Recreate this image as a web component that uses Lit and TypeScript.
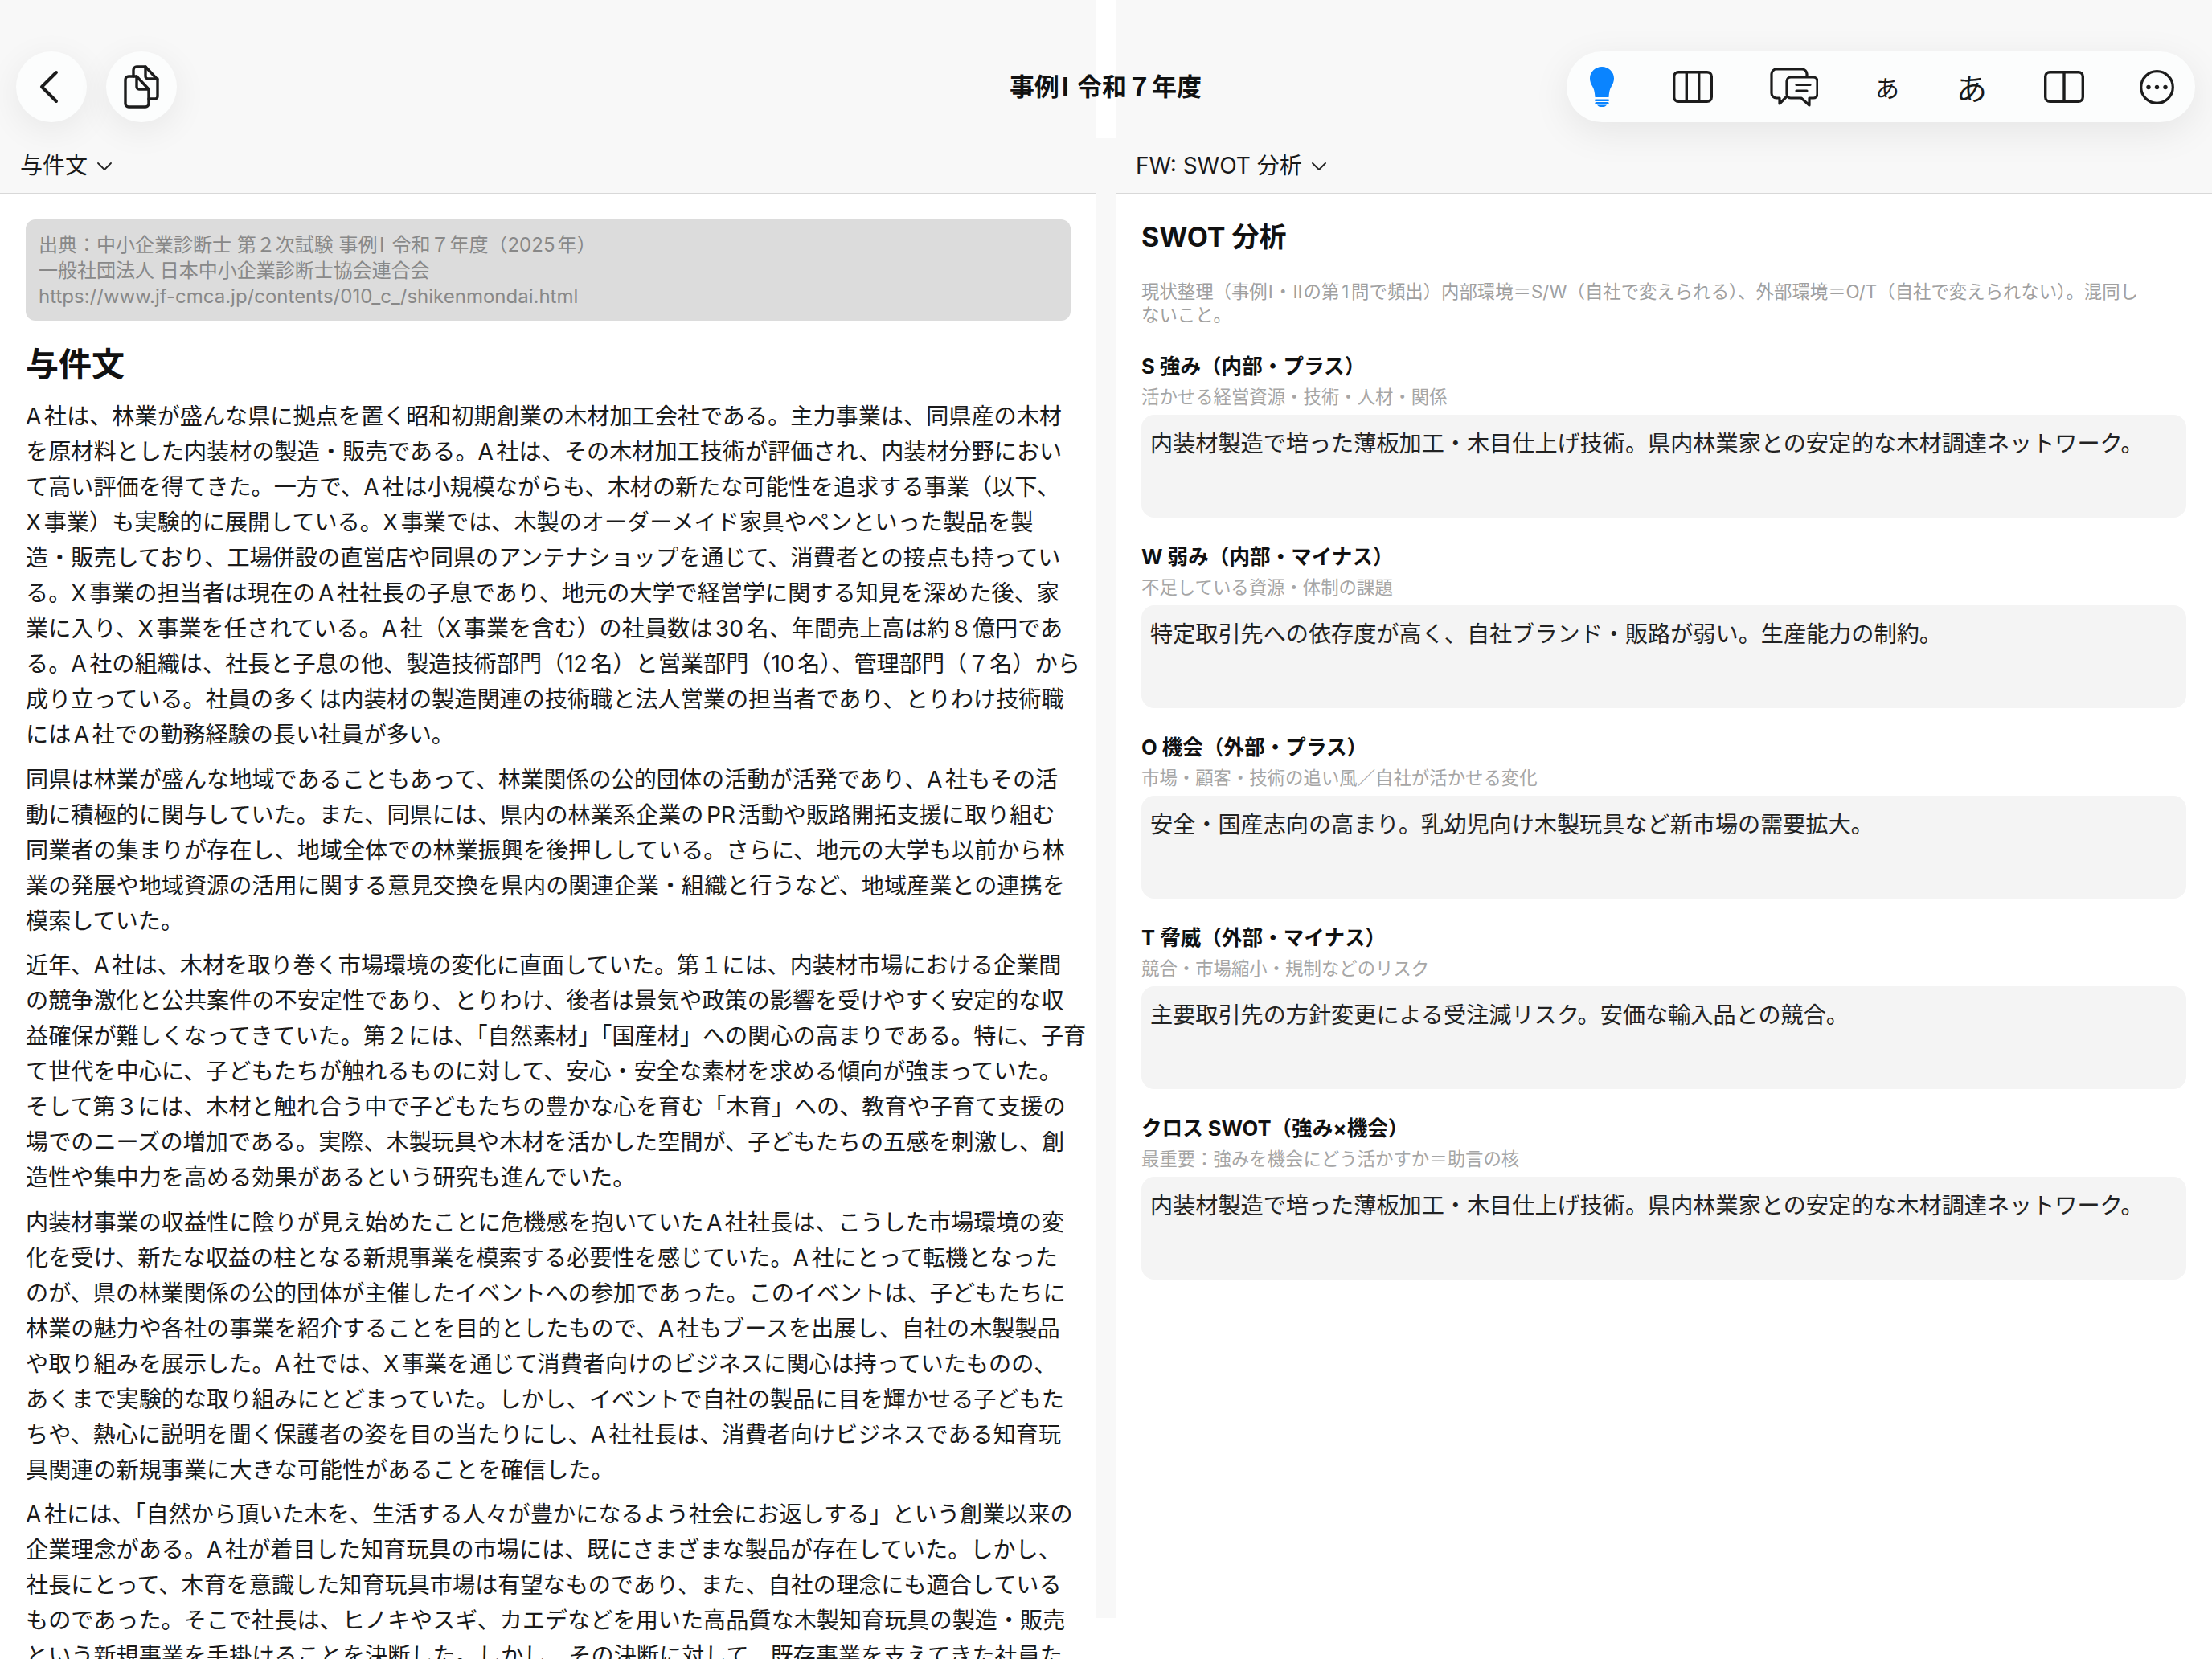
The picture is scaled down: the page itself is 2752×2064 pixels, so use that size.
import {css, html, LitElement} from "lit";
import {customElement} from "lit/decorators.js";

const chevron = html`<svg class="chev" viewBox="0 0 18 10" fill="none" stroke="#222" stroke-width="1.8" stroke-linecap="round" stroke-linejoin="round"><path d="M1 1l8 8 8-8"/></svg>`

const paragraphs = [
  [
    "A社は、林業が盛んな県に拠点を置く昭和初期創業の木材加工会社である。主力事業は、同県産の木材",
    "を原材料とした内装材の製造・販売である。A社は、その木材加工技術が評価され、内装材分野におい",
    "て高い評価を得てきた。一方で、A社は小規模ながらも、木材の新たな可能性を追求する事業（以下、",
    "X事業）も実験的に展開している。X事業では、木製のオーダーメイド家具やペンといった製品を製",
    "造・販売しており、工場併設の直営店や同県のアンテナショップを通じて、消費者との接点も持ってい",
    "る。X事業の担当者は現在のA社社長の子息であり、地元の大学で経営学に関する知見を深めた後、家",
    "業に入り、X事業を任されている。A社（X事業を含む）の社員数は30名、年間売上高は約８億円であ",
    "る。A社の組織は、社長と子息の他、製造技術部門（12名）と営業部門（10名）、管理部門（７名）から",
    "成り立っている。社員の多くは内装材の製造関連の技術職と法人営業の担当者であり、とりわけ技術職",
    "にはA社での勤務経験の長い社員が多い。",
  ],
  [
    "同県は林業が盛んな地域であることもあって、林業関係の公的団体の活動が活発であり、A社もその活",
    "動に積極的に関与していた。また、同県には、県内の林業系企業のPR活動や販路開拓支援に取り組む",
    "同業者の集まりが存在し、地域全体での林業振興を後押ししている。さらに、地元の大学も以前から林",
    "業の発展や地域資源の活用に関する意見交換を県内の関連企業・組織と行うなど、地域産業との連携を",
    "模索していた。",
  ],
  [
    "近年、A社は、木材を取り巻く市場環境の変化に直面していた。第１には、内装材市場における企業間",
    "の競争激化と公共案件の不安定性であり、とりわけ、後者は景気や政策の影響を受けやすく安定的な収",
    "益確保が難しくなってきていた。第２には、「自然素材」「国産材」への関心の高まりである。特に、子育",
    "て世代を中心に、子どもたちが触れるものに対して、安心・安全な素材を求める傾向が強まっていた。",
    "そして第３には、木材と触れ合う中で子どもたちの豊かな心を育む「木育」への、教育や子育て支援の",
    "場でのニーズの増加である。実際、木製玩具や木材を活かした空間が、子どもたちの五感を刺激し、創",
    "造性や集中力を高める効果があるという研究も進んでいた。",
  ],
  [
    "内装材事業の収益性に陰りが見え始めたことに危機感を抱いていたA社社長は、こうした市場環境の変",
    "化を受け、新たな収益の柱となる新規事業を模索する必要性を感じていた。A社にとって転機となった",
    "のが、県の林業関係の公的団体が主催したイベントへの参加であった。このイベントは、子どもたちに",
    "林業の魅力や各社の事業を紹介することを目的としたもので、A社もブースを出展し、自社の木製製品",
    "や取り組みを展示した。A社では、X事業を通じて消費者向けのビジネスに関心は持っていたものの、",
    "あくまで実験的な取り組みにとどまっていた。しかし、イベントで自社の製品に目を輝かせる子どもた",
    "ちや、熱心に説明を聞く保護者の姿を目の当たりにし、A社社長は、消費者向けビジネスである知育玩",
    "具関連の新規事業に大きな可能性があることを確信した。",
  ],
  [
    "A社には、「自然から頂いた木を、生活する人々が豊かになるよう社会にお返しする」という創業以来の",
    "企業理念がある。A社が着目した知育玩具の市場には、既にさまざまな製品が存在していた。しかし、",
    "社長にとって、木育を意識した知育玩具市場は有望なものであり、また、自社の理念にも適合している",
    "ものであった。そこで社長は、ヒノキやスギ、カエデなどを用いた高品質な木製知育玩具の製造・販売",
    "という新規事業を手掛けることを決断した。しかし、その決断に対して、既存事業を支えてきた社員た",
  ],
]

const sections = [
  {
    label: "S 強み（内部・プラス）",
    hint: "活かせる経営資源・技術・人材・関係",
    value: "内装材製造で培った薄板加工・木目仕上げ技術。県内林業家との安定的な木材調達ネットワーク。",
  },
  {
    label: "W 弱み（内部・マイナス）",
    hint: "不足している資源・体制の課題",
    value: "特定取引先への依存度が高く、自社ブランド・販路が弱い。生産能力の制約。",
  },
  {
    label: "O 機会（外部・プラス）",
    hint: "市場・顧客・技術の追い風／自社が活かせる変化",
    value: "安全・国産志向の高まり。乳幼児向け木製玩具など新市場の需要拡大。",
  },
  {
    label: "T 脅威（外部・マイナス）",
    hint: "競合・市場縮小・規制などのリスク",
    value: "主要取引先の方針変更による受注減リスク。安価な輸入品との競合。",
  },
  {
    label: "クロス SWOT（強み×機会）",
    hint: "最重要：強みを機会にどう活かすか＝助言の核",
    value: "内装材製造で培った薄板加工・木目仕上げ技術。県内林業家との安定的な木材調達ネットワーク。",
  },
]

@customElement('app-root')
export class AppRoot extends LitElement {

  static styles = css`
    :host {
      display: grid;
      grid-template-columns: 1364px 24px 1fr;
      position: relative;
      height: 2064px;
      overflow: hidden;
      background: #fff;
      color: #1a1a1a;
      font-family: "Inter", "Noto Sans CJK JP", sans-serif;
      font-feature-settings: "chws";
      text-autospace: normal;
      text-spacing-trim: normal;
    }

    .pane {
      min-width: 0;
      overflow: hidden;
    }

    .pane-head {
      display: flex;
      align-items: flex-end;
      box-sizing: border-box;
      height: 241px;
      padding: 0 25px 16px;
      background: #f8f8f8;
      border-bottom: 1px solid #d8d8d8;
    }

    .pane-title {
      display: flex;
      align-items: center;
      gap: 12px;
      font-size: 28px;
      line-height: 36px;
    }

    .chev {
      width: 18px;
      height: 10px;
      margin-top: 2px;
    }

    .divider {
      margin-top: 172px;
      height: 1841px;
      background: #f8f8f8;
    }

    .left {
      padding: 32px;
    }

    .source {
      box-sizing: border-box;
      height: 126px;
      padding: 16px;
      border-radius: 12px;
      background: #dcdcdc;
      color: #888;
      font-size: 24px;
      line-height: 32px;
      white-space: nowrap;
    }

    .rn {
      padding: 0 0.1em;
    }

    .left h1 {
      margin: 28px 0 17px;
      font-size: 41px;
      line-height: 52px;
      font-weight: 700;
      color: #111;
    }

    .left p {
      margin: 0 0 11.6px;
      font-size: 28.15px;
      line-height: 44px;
      white-space: nowrap;
    }

    .right {
      padding: 30px 32px 0;
    }

    .right h2 {
      margin: 0 0 29px;
      font-size: 34px;
      line-height: 48px;
      font-weight: 700;
      color: #111;
    }

    .intro {
      margin: 0 0 32px;
      color: #a0a0a0;
      font-size: 22.4px;
      line-height: 29px;
    }

    .intro .rn {
      padding: 0 0.05em;
    }

    .section {
      margin-bottom: 31px;
    }

    .label {
      margin-bottom: 5px;
      font-size: 25.6px;
      line-height: 36px;
      font-weight: 700;
      color: #111;
    }

    .hint {
      margin-bottom: 7px;
      color: #a6a6a6;
      font-size: 22.4px;
      line-height: 30px;
    }

    .field {
      box-sizing: border-box;
      height: 128px;
      padding: 14px 11px;
      border-radius: 16px;
      background: #f4f4f4;
      font-size: 28.15px;
      line-height: 44px;
      color: #222;
    }

    .topbar {
      position: absolute;
      top: 64px;
      left: 20px;
      right: 21px;
      display: grid;
      grid-template-columns: 1fr auto 1fr;
      align-items: center;
    }

    .nav {
      display: flex;
      gap: 24px;
    }

    .round {
      display: flex;
      align-items: center;
      justify-content: center;
      width: 88px;
      height: 88px;
      border-radius: 50%;
      background: #fcfdfd;
      box-shadow: 0 10px 44px rgba(0, 0, 0, 0.07);
    }

    .back {
      margin-right: 6px;
    }

    .title {
      font-size: 31px;
      line-height: 40px;
      font-weight: 700;
      color: #111;
    }

    .tools {
      justify-self: end;
      display: flex;
      align-items: center;
      gap: 71px;
      box-sizing: border-box;
      height: 88px;
      padding: 0 26px 0 29px;
      border-radius: 44px;
      background: #fcfdfd;
      box-shadow: 0 12px 48px rgba(0, 0, 0, 0.08);
    }

    .bulb {
      margin-right: 2px;
    }

    .split {
      margin-right: -2px;
    }

    .kana {
      color: #1a1a1a;
      font-family: "Noto Sans CJK JP", sans-serif;
      line-height: 40px;
    }

    .kana.small {
      font-size: 30px;
    }

    .kana.large {
      font-size: 38px;
    }
  `

  connectedCallback() {
    super.connectedCallback()
    this.setAttribute('lang', 'ja')
  }

  render() {
    return html`
      <section class="pane">
        <div class="pane-head">
          <div class="pane-title">与件文 ${chevron}</div>
        </div>
        <div class="left">
          <div class="source">
            出典：中小企業診断士 第２次試験 事例<span class="rn">Ⅰ</span> 令和７年度（2025年）<br>
            一般社団法人 日本中小企業診断士協会連合会<br>
            https://www.jf-cmca.jp/contents/010_c_/shikenmondai.html
          </div>
          <h1>与件文</h1>
          ${paragraphs.map(lines => html`
            <p>${lines.map((line, i) => html`${i ? html`<br>` : ''}${line}`)}</p>
          `)}
        </div>
      </section>

      <div class="divider"></div>

      <section class="pane">
        <div class="pane-head">
          <div class="pane-title">FW: SWOT 分析 ${chevron}</div>
        </div>
        <div class="right">
          <h2>SWOT 分析</h2>
          <div class="intro">現状整理（事例<span class="rn">Ⅰ</span>・<span class="rn">Ⅱ</span>の第1問で頻出）内部環境＝S/W（自社で変えられる）、外部環境＝O/T（自社で変えられない）。混同し<br>ないこと。</div>
          ${sections.map(s => html`
            <div class="section">
              <div class="label">${s.label}</div>
              <div class="hint">${s.hint}</div>
              <div class="field">${s.value}</div>
            </div>
          `)}
        </div>
      </section>

      <div class="topbar">
        <div class="nav">
          <div class="round">
            <svg class="back" width="26" height="42" viewBox="0 0 26 42" fill="none" stroke="#1c1c1c" stroke-width="4" stroke-linecap="round" stroke-linejoin="round"><path d="M22 3L4 21l18 18"/></svg>
          </div>
          <div class="round">
            <svg width="44" height="54" viewBox="0 0 44 54" fill="none" stroke="#1c1c1c" stroke-width="3.4" stroke-linecap="round" stroke-linejoin="round">
              <path d="M12 14V6a4 4 0 0 1 4-4h11l15 16v21a3 3 0 0 1-3 3h-8"/>
              <path d="M27 2v12a3 3 0 0 0 3 3h12"/>
              <path d="M2 18a4 4 0 0 1 4-4h10l15 16v18a4 4 0 0 1-4 4H6a4 4 0 0 1-4-4Z"/>
              <path d="M16 14v13a3 3 0 0 0 3 3h12"/>
            </svg>
          </div>
        </div>
        <div class="title">事例<span class="rn">Ⅰ</span> 令和７年度</div>
        <div class="tools">
          <svg class="bulb" width="30" height="50" viewBox="0 0 30 50" fill="#0a84ff">
            <path d="M15 0C6.7 0 0 6.5 0 14.5c0 4 1.5 7 3.2 10 1.7 3 2.8 6 3.3 13.5h17c.5-7.500 1.600-10.500 3.300-13.500 1.700-3 3.200-6 3.200-10C30 6.500 23.300 0 15 0Z"/>
            <rect x="6" y="40.500" width="18" height="2.400" rx="1.200"/>
            <rect x="6.500" y="44" width="17" height="2.400" rx="1.200"/>
            <path d="M9 47.400h12c-.8 1.700-3 2.600-6 2.600s-5.200-.9-6-2.600Z"/>
          </svg>
          <svg width="50" height="40" viewBox="0 0 50 40" fill="none" stroke="#1c1c1c" stroke-width="3.400">
            <rect x="1.700" y="1.700" width="46.600" height="36.600" rx="5.500"/>
            <path d="M17.300 1.700v36.600M32.700 1.700v36.600"/>
          </svg>
          <svg width="60" height="49" viewBox="0 0 60 49" fill="none" stroke="#1c1c1c" stroke-width="3.200" stroke-linecap="round" stroke-linejoin="round">
            <path d="M46 11V8a6 6 0 0 0-6-6H8a6 6 0 0 0-6 6v24a6 6 0 0 0 6 6h4v7l8-8"/>
            <path d="M31 12h23a5 5 0 0 1 5 5v16a5 5 0 0 1-5 5h-5v9l-10-9h-13a5 5 0 0 1-5-5V17a5 5 0 0 1 5-5Z"/>
            <path d="M33 21.500h17M33 29h13"/>
          </svg>
          <span class="kana small">あ</span>
          <span class="kana large">あ</span>
          <svg class="split" width="50" height="40" viewBox="0 0 50 40" fill="none" stroke="#1c1c1c" stroke-width="3.400">
            <rect x="1.700" y="1.700" width="46.600" height="36.600" rx="5.500"/>
            <path d="M25 1.700v36.600"/>
          </svg>
          <svg width="43" height="43" viewBox="0 0 43 43" fill="none" stroke="#1c1c1c" stroke-width="3.200">
            <circle cx="21.500" cy="21.500" r="19.800"/>
            <circle cx="11" cy="21.500" r="2.700" fill="#1c1c1c" stroke="none"/>
            <circle cx="21.500" cy="21.500" r="2.700" fill="#1c1c1c" stroke="none"/>
            <circle cx="32" cy="21.500" r="2.700" fill="#1c1c1c" stroke="none"/>
          </svg>
        </div>
      </div>
    `
  }
}
